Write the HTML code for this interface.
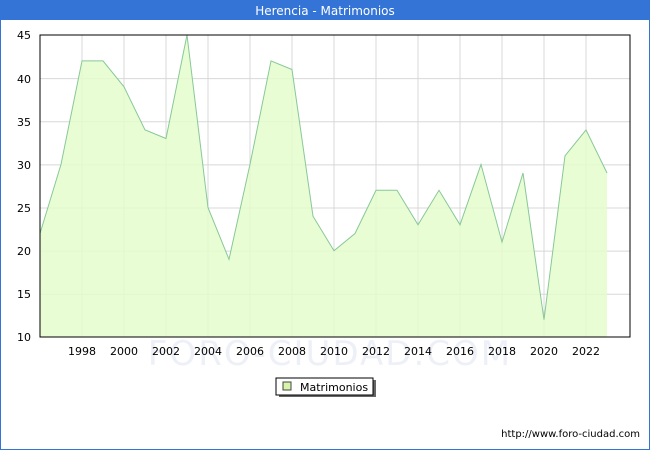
<!DOCTYPE html>
<html><head><meta charset="utf-8"><style>
body{margin:0;width:650px;height:450px;overflow:hidden;background:#fff;font-family:"DejaVu Sans","Liberation Sans",sans-serif}
</style></head><body>
<svg width="650" height="450" xmlns="http://www.w3.org/2000/svg" font-family="DejaVu Sans, Liberation Sans, sans-serif">
<rect x="0.5" y="0.5" width="649" height="449" fill="#fff" stroke="#3374d6" stroke-width="1"/>
<rect x="0" y="0" width="650" height="20" fill="#3374d6"/>
<text x="325" y="15" text-anchor="middle" fill="#fff" font-size="12">Herencia - Matrimonios</text>
<g stroke="#d8d8d8" stroke-width="1">
<line x1="40" y1="294.3" x2="630" y2="294.3"/><line x1="40" y1="251.1" x2="630" y2="251.1"/>
<line x1="40" y1="208" x2="630" y2="208"/><line x1="40" y1="164.9" x2="630" y2="164.9"/>
<line x1="40" y1="121.7" x2="630" y2="121.7"/><line x1="40" y1="78.6" x2="630" y2="78.6"/>
<line x1="82" y1="35" x2="82" y2="337"/><line x1="124" y1="35" x2="124" y2="337"/><line x1="166" y1="35" x2="166" y2="337"/><line x1="208" y1="35" x2="208" y2="337"/><line x1="250" y1="35" x2="250" y2="337"/><line x1="292" y1="35" x2="292" y2="337"/><line x1="334" y1="35" x2="334" y2="337"/><line x1="376" y1="35" x2="376" y2="337"/><line x1="418" y1="35" x2="418" y2="337"/><line x1="460" y1="35" x2="460" y2="337"/><line x1="502" y1="35" x2="502" y2="337"/><line x1="544" y1="35" x2="544" y2="337"/><line x1="586" y1="35" x2="586" y2="337"/>
</g>
<text x="330" y="365" text-anchor="middle" font-size="34" fill="#eef0f8" letter-spacing="2">FORO-CIUDAD.COM</text>
<polygon fill="#e4fdcc" fill-opacity="0.85" stroke="none" points="40,337 40,233.5 61,164.4 82,60.9 103,60.9 124,86.8 145,129.9 166,138.5 187,35 208,207.6 229,259.3 250,164.4 271,60.9 292,69.5 313,216.2 334,250.7 355,233.5 376,190.3 397,190.3 418,224.8 439,190.3 460,224.8 481,164.4 502,242.1 523,173 544,319.7 565,155.8 586,129.9 607,173 607,337"/>
<polyline fill="none" stroke="#88c898" stroke-width="1" points="40,233.5 61,164.4 82,60.9 103,60.9 124,86.8 145,129.9 166,138.5 187,35 208,207.6 229,259.3 250,164.4 271,60.9 292,69.5 313,216.2 334,250.7 355,233.5 376,190.3 397,190.3 418,224.8 439,190.3 460,224.8 481,164.4 502,242.1 523,173 544,319.7 565,155.8 586,129.9 607,173"/>
<rect x="40" y="35" width="590" height="302" fill="none" stroke="#000" stroke-width="1"/>
<g font-size="11" fill="#000" text-anchor="end">
<text x="31" y="341">10</text><text x="31" y="298">15</text><text x="31" y="255">20</text><text x="31" y="212">25</text><text x="31" y="169">30</text><text x="31" y="126">35</text><text x="31" y="83">40</text><text x="31" y="39">45</text>
</g>
<g font-size="11" fill="#000" text-anchor="middle">
<text x="82" y="355">1998</text><text x="124" y="355">2000</text><text x="166" y="355">2002</text><text x="208" y="355">2004</text><text x="250" y="355">2006</text><text x="292" y="355">2008</text><text x="334" y="355">2010</text><text x="376" y="355">2012</text><text x="418" y="355">2014</text><text x="460" y="355">2016</text><text x="502" y="355">2018</text><text x="544" y="355">2020</text><text x="586" y="355">2022</text>
</g>
<rect x="279" y="380" width="97" height="17" fill="#666"/>
<rect x="276" y="378" width="97" height="17" fill="#fff" stroke="#000" stroke-width="1"/>
<rect x="283" y="382" width="8" height="8" fill="#d6f5a8" stroke="#444" stroke-width="1"/>
<text x="300" y="391" font-size="11" fill="#000">Matrimonios</text>
<text x="640" y="437" text-anchor="end" font-size="10" fill="#000">http://www.foro-ciudad.com</text>
</svg>
</body></html>
